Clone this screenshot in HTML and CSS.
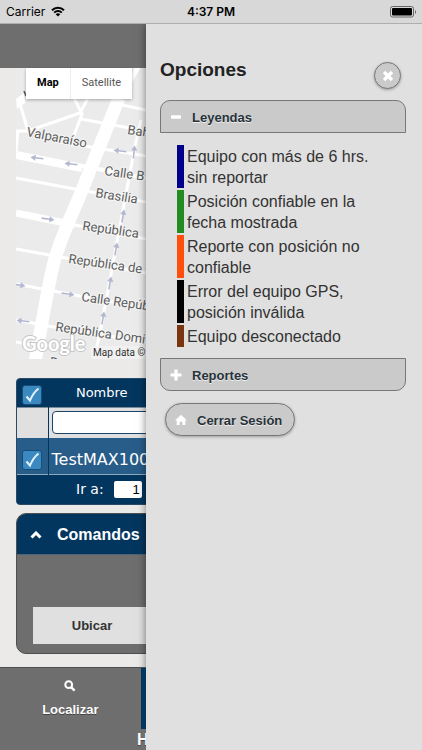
FILE: index.html
```html
<!DOCTYPE html>
<html lang="es">
<head>
<meta charset="utf-8">
<meta name="viewport" content="width=device-width, initial-scale=1">
<title>Localizar</title>
<link rel="stylesheet" href="styles.css">
</head>
<body>

<div class="status-bar">
  <div class="carrier">
    Carrier
    <svg width="14" height="11" viewBox="0 0 14 11">
      <path d="M1 4.200a8.600 8.600 0 0 1 12 0M3.200 6.600a5.400 5.400 0 0 1 7.600 0" fill="none" stroke="#000" stroke-width="2"/>
      <path d="M7 10.600L4.700 8.300a3.300 3.300 0 0 1 4.600 0z"/>
    </svg>
  </div>
  <div class="clock">4:37 PM</div>
  <svg class="battery" width="26" height="12" viewBox="0 0 26 12">
    <rect x=".5" y=".5" width="23" height="10.500" rx="2" fill="none" stroke="#666"/>
    <rect x="2" y="2" width="20" height="7.500" rx="1"/>
    <path d="M25 4v4q1-.6 1-2t-1-2z" fill="#666"/>
  </svg>
</div>

<div class="wrapper">

  <!-- Page under the menu -->
  <div class="page">
    <div class="page-header"></div>

    <div class="content">
      <div class="map">
        <svg class="map-canvas" width="130" height="291" viewBox="16 68 130 291">
          <defs>
            <path id="arrow" d="M-6.500 -.8H1.500V-3L6.500 0L1.500 3V.8H-6.500z" fill="#b3b7cf"/>
          </defs>
          <rect x="16" y="68" width="130" height="291" fill="#ebebeb"/>
          <g fill="none" stroke="#fff" stroke-width="3">
            <path d="M117 103L140 64" stroke-width="5"/>
            <path d="M119 98L78 200Q58 245 53 266T35 362" stroke-width="13"/>
            <path d="M16 155L82 168" stroke-width="8"/>
            <path d="M82 166L146 178" stroke-width="4"/>
            <path d="M16 213L75 225" stroke-width="7"/>
            <path d="M75 225L146 239"/>
            <path d="M16 178L80 190L146 202"/>
            <path d="M16 249L66 258L146 273"/>
            <path d="M16 284L80 296L146 308"/>
            <path d="M16 320L54 327L146 342"/>
            <path d="M16 342L42 347"/>
            <path d="M20 104L28 131M18 130L16 152M16 131H28L80 113L88 98M74 98L82 114L73 138"/>
            <path d="M81 119L146 131M122 105L146 110M60 142L146 156"/>
            <path d="M141 120L135 146L123 210L100 333L94 359"/>
          </g>
          <path d="M16 99L24 93L25 103L17 109z" fill="#fff"/>
          <path d="M24 91l2 5" stroke="#555" stroke-width="1.500"/>
          <use href="#arrow" transform="translate(37 158) rotate(187)"/>
          <use href="#arrow" transform="translate(71 164) rotate(187)"/>
          <use href="#arrow" transform="translate(120 151) rotate(187)"/>
          <use href="#arrow" transform="translate(134 152) rotate(-84)"/>
          <use href="#arrow" transform="translate(48 219) rotate(8)"/>
          <use href="#arrow" transform="translate(123 216) rotate(-80)"/>
          <use href="#arrow" transform="translate(116 249) rotate(-80)"/>
          <use href="#arrow" transform="translate(110 283) rotate(-80)"/>
          <use href="#arrow" transform="translate(103 318) rotate(-80)"/>
          <use href="#arrow" transform="translate(19 285) rotate(8)"/>
          <use href="#arrow" transform="translate(68 294) rotate(8)"/>
          <use href="#arrow" transform="translate(23 321) rotate(187)"/>
          <g class="street">
            <text transform="translate(26 136) rotate(11)">Valparaíso</text>
            <text transform="translate(127 134) rotate(8)">Bah</text>
            <text transform="translate(104 175) rotate(8)">Calle B</text>
            <text transform="translate(95 197) rotate(9)">Brasilia</text>
            <text transform="translate(82 230) rotate(8)">República</text>
            <text transform="translate(68 263) rotate(8)">República de</text>
            <text transform="translate(81 301) rotate(8)">Calle Repúb</text>
            <text transform="translate(55 331) rotate(8)">República Domi</text>
            <text transform="translate(49 366) rotate(9)">R</text>
          </g>
          <text class="google" x="22" y="351">Google</text>
          <rect x="91" y="346" width="55" height="13" fill="#f2f2f2" fill-opacity=".8"/>
          <text class="map-data" x="93" y="356">Map data ©</text>
        </svg>
        <div class="map-type">
          <button class="map-button active">Map</button>
          <button class="map-button">Satellite</button>
        </div>
      </div>

      <div class="grid">
        <table class="grid-table">
          <tr class="grid-head">
            <th class="check-cell"><input type="checkbox" class="check" aria-label="Todos" checked></th>
            <th class="name-cell">Nombre</th>
            <th></th>
          </tr>
          <tr class="grid-filter">
            <td class="check-cell"></td>
            <td colspan="2"><input type="text" class="filter" aria-label="Filtrar nombre"></td>
          </tr>
          <tr class="grid-row">
            <td class="check-cell"><input type="checkbox" class="check" aria-label="TestMAX100" checked></td>
            <td colspan="2">TestMAX100</td>
          </tr>
        </table>
        <div class="grid-pager">
          <label for="goto">Ir a:</label>
          <input type="text" id="goto" value="1">
        </div>
      </div>

      <div class="commands">
        <button class="commands-head">
          <svg width="12" height="8" viewBox="0 0 12 8"><path d="M1.500 6.500L6 2L10.500 6.500" fill="none" stroke="#fff" stroke-width="3"/></svg>
          Comandos
        </button>
        <div class="commands-body">
          <button class="locate">Ubicar</button>
        </div>
      </div>
    </div>

    <div class="footer">
      <div class="navbar">
        <a href="#" class="tab">
          <svg width="12" height="12" viewBox="0 0 12 12"><circle cx="4.700" cy="4.700" r="3.400" fill="none" stroke="#fff" stroke-width="2"/><path d="M7.300 7.300L10.600 10.600" stroke="#fff" stroke-width="2.400"/></svg>
          Localizar
        </a>
        <a href="#" class="tab active" aria-label="Siguiente"></a>
        <a href="#" class="tab" aria-label="Otros"></a>
      </div>
      <div class="footer-title">H</div>
    </div>
  </div>

  <!-- Options menu -->
  <div class="panel">
    <div class="panel-top">
      <h3>Opciones</h3>
      <button class="close" aria-label="Cerrar">
        <svg width="12" height="12" viewBox="0 0 12 12"><path d="M2 2L10 10M10 2L2 10" stroke="#fff" stroke-width="3.400"/></svg>
      </button>
    </div>

    <button class="collapse first">
      <svg width="12" height="12" viewBox="0 0 12 12"><path d="M1 6H11" stroke="#fff" stroke-width="3.400"/></svg>
      Leyendas
    </button>
    <ul class="legend">
      <li class="blue">Equipo con más de 6 hrs. sin reportar</li>
      <li class="green">Posición confiable en la fecha mostrada</li>
      <li class="orange">Reporte con posición no confiable</li>
      <li class="black">Error del equipo GPS, posición inválida</li>
      <li class="brown">Equipo desconectado</li>
    </ul>
    <button class="collapse last">
      <svg width="12" height="12" viewBox="0 0 12 12"><path d="M.5 6H11.500M6 .5V11.500" stroke="#fff" stroke-width="3.200"/></svg>
      Reportes
    </button>

    <button class="logout">
      <svg width="12" height="12" viewBox="0 0 12 12"><path d="M6 .8L12 6.500H10.300V11H7.400V7.800H4.600V11H1.700V6.500H0z" fill="#fff"/></svg>
      Cerrar Sesión
    </button>
  </div>

</div>

</body>
</html>
```
FILE: styles.css
```css
* {
  box-sizing: border-box;
}
body {
  margin: 0;
  min-height: 100vh;
  display: flex;
  flex-direction: column;
  background-color: #ebeae8;
  font-family: "Liberation Sans", Arial, sans-serif;
  font-size: 16px;
}
button {
  font-family: inherit;
  border: none;
  padding: 0;
  cursor: pointer;
}

/* Status bar */
.status-bar {
  position: relative;
  z-index: 3;
  display: grid;
  grid-template-columns: 1fr auto 1fr;
  align-items: center;
  height: 24px;
  padding: 0 6px;
  background-color: #d8d8d8;
  border-bottom: 1px solid #aeaeae;
  font-family: Inter, sans-serif;
  font-size: 12px;
  color: #000;
}
.carrier {
  display: flex;
  align-items: center;
  gap: 6px;
}
.clock {
  font-weight: 600;
}
.battery {
  justify-self: end;
}

.wrapper {
  flex: 1;
  display: flex;
}

/* Page under the menu */
.page {
  flex: 1;
  min-width: 0;
  overflow: hidden;
  display: flex;
  flex-direction: column;
}
.page-header {
  height: 44px;
  background-color: #6e6e6e;
}
.content {
  flex: 1;
  width: 100vw;
  padding: 0 16px;
}

/* Map */
.map {
  position: relative;
  background-color: #ebebeb;
}
.map-canvas {
  display: block;
}
.street {
  font-family: Roboto, sans-serif;
  font-size: 13px;
  fill: #5c5c5c;
  stroke: #f5f5f5;
  stroke-width: 2px;
  paint-order: stroke;
}
.google {
  font-family: Lato, sans-serif;
  font-size: 20px;
  font-weight: bold;
  fill: #fff;
  stroke: #c6c6c6;
  stroke-width: 2px;
  paint-order: stroke;
}
.map-data {
  font-family: Roboto, sans-serif;
  font-size: 10px;
  fill: #333;
}
.map-type {
  position: absolute;
  top: 0;
  left: 10px;
  display: flex;
  box-shadow: 0 1px 3px rgba(0, 0, 0, 0.3);
}
.map-button {
  height: 31px;
  padding: 0 11px 3px;
  background-color: #fff;
  font-family: Roboto, sans-serif;
  font-size: 11px;
  color: #555;
}
.map-button.active {
  border-right: 1px solid #eee;
  font-weight: bold;
  color: #000;
}

/* Vehicle grid */
.grid {
  margin-top: 19px;
  border: 1px solid #294a66;
  border-radius: 4px;
  overflow: hidden;
  background-color: #03365f;
  font-family: "DejaVu Sans", Verdana, sans-serif;
  color: #fff;
}
.grid-table {
  width: 100%;
  table-layout: fixed;
  border-collapse: collapse;
}
.grid-table th,
.grid-table td {
  padding: 0 3px;
  text-align: left;
}
.grid-table .check-cell {
  width: 31px;
  padding: 5px 0 0;
  border-right: 1px solid #03365f;
  text-align: center;
}
.grid-table .name-cell {
  width: 107px;
  text-align: center;
  font-size: 13px;
  font-weight: normal;
}
.grid-head {
  height: 28px;
}
.grid-filter {
  height: 31px;
  background-color: #e0e0e0;
  border-top: 1px solid #7d8c99;
}
.grid-row {
  height: 36px;
  background-color: #285c89;
  border-bottom: 1px solid #8ba8c1;
}
.grid-table .grid-row td {
  padding-top: 8px;
}
.check {
  appearance: none;
  display: block;
  width: 20px;
  height: 20px;
  margin: 0 auto;
  border: 1px solid #174d79;
  border-radius: 3px;
  background: #3a89c0 url("data:image/svg+xml,%3Csvg xmlns='http://www.w3.org/2000/svg' viewBox='0 0 18 18'%3E%3Cpath d='M3.500 10.500L7 14.500Q10 7 15.500 2.500' fill='none' stroke='%23e4f1fa' stroke-width='2'/%3E%3C/svg%3E") center / 18px 18px no-repeat;
}
.filter {
  display: block;
  width: 100%;
  height: 23px;
  padding: 0 4px;
  border: 1px solid #1d456b;
  border-radius: 4px;
  background-color: #fff;
}
.grid-pager {
  display: flex;
  align-items: center;
  gap: 10px;
  height: 29px;
  padding-left: 59px;
  font-size: 14px;
}
.grid-pager input {
  width: 28px;
  height: 17px;
  padding: 0 2px;
  border: none;
  border-radius: 2px;
  background-color: #fff;
  font-family: "Liberation Sans", Arial, sans-serif;
  font-size: 13px;
  text-align: right;
  color: #000;
}

/* Commands */
.commands {
  margin-top: 8px;
  border: 1px solid #4f4f4f;
  border-radius: 10px;
  overflow: hidden;
  background-color: #6e6e6e;
}
.commands-head {
  display: flex;
  align-items: center;
  gap: 15px;
  width: 100%;
  height: 41px;
  padding: 2px 13px 0;
  border-bottom: 1px solid #4f6577;
  background-color: #03365f;
  font-size: 16px;
  font-weight: bold;
  color: #fff;
}
.commands-body {
  padding: 52px 16px 9px;
}
.locate {
  display: block;
  width: 118px;
  height: 37px;
  background-color: #e0e0e0;
  font-size: 13px;
  font-weight: bold;
  color: #333;
}

/* Footer */
.footer {
  position: relative;
  z-index: 2;
  width: 100vw;
  margin-top: 13px;
  background-color: #6e6e6e;
  border-top: 1px solid #4f4f4f;
}
.navbar {
  display: grid;
  grid-template-columns: repeat(3, 1fr);
}
.tab {
  display: flex;
  flex-direction: column;
  align-items: center;
  gap: 10px;
  height: 61px;
  padding-top: 12px;
  font-size: 13px;
  font-weight: bold;
  text-decoration: none;
  color: #fff;
  text-shadow: 0 1px 0 #444;
}
.tab.active {
  background-color: #03365f;
}
.footer-title {
  height: 22px;
  padding-left: 137px;
  line-height: 22px;
  font-weight: bold;
  color: #fff;
  text-shadow: 0 1px 0 #444;
}

/* Options menu */
.panel {
  position: relative;
  z-index: 1;
  flex: 0 0 276px;
  padding: 34px 16px 16px 14px;
  background-color: #e0e0e0;
  box-shadow: 0 0 8px rgba(0, 0, 0, 0.5);
  color: #333;
}
.panel-top {
  display: flex;
  justify-content: space-between;
  margin-bottom: 11px;
}
.panel h3 {
  margin: 0;
  font-size: 19px;
  line-height: 24px;
  color: #222;
}
.close {
  display: flex;
  align-items: center;
  justify-content: center;
  width: 27px;
  height: 27px;
  margin: 4px 5px 0 0;
  border: 1px solid #777;
  border-radius: 50%;
  background-color: #cacaca;
  box-shadow: 0 1px 3px rgba(0, 0, 0, 0.3);
}
.collapse {
  display: flex;
  align-items: center;
  gap: 10px;
  width: 100%;
  height: 33px;
  padding: 2px 9px 0;
  border: 1px solid #777;
  background-color: #cacaca;
  font-size: 13px;
  font-weight: bold;
  color: #27323a;
  text-shadow: 0 1px 0 #eee;
}
.collapse svg,
.logout svg {
  margin-top: -2px;
}
.first {
  border-radius: 10px 10px 0 0;
}
.last {
  border-radius: 0 0 10px 10px;
}
.legend {
  display: flex;
  flex-direction: column;
  gap: 2px;
  margin: 0;
  padding: 12px 16px 11px 17px;
  list-style: none;
}
.legend li {
  padding: 1px 0 0 3px;
  border-left: 7px solid;
  line-height: 21px;
  color: #333;
}
.legend .blue { border-left-color: #00008b; }
.legend .green { border-left-color: #228b22; }
.legend .orange { border-left-color: #ff4f0a; }
.legend .black { border-left-color: #000; }
.legend .brown { border-left-color: #7a3510; }
.logout {
  display: flex;
  align-items: center;
  gap: 10px;
  height: 33px;
  margin: 12px 0 0 5px;
  padding: 2px 12px 0 9px;
  border: 1px solid #777;
  border-radius: 17px;
  background-color: #cacaca;
  box-shadow: 0 1px 3px rgba(0, 0, 0, 0.3);
  font-size: 13px;
  font-weight: bold;
  color: #27323a;
  text-shadow: 0 1px 0 #eee;
}
```
